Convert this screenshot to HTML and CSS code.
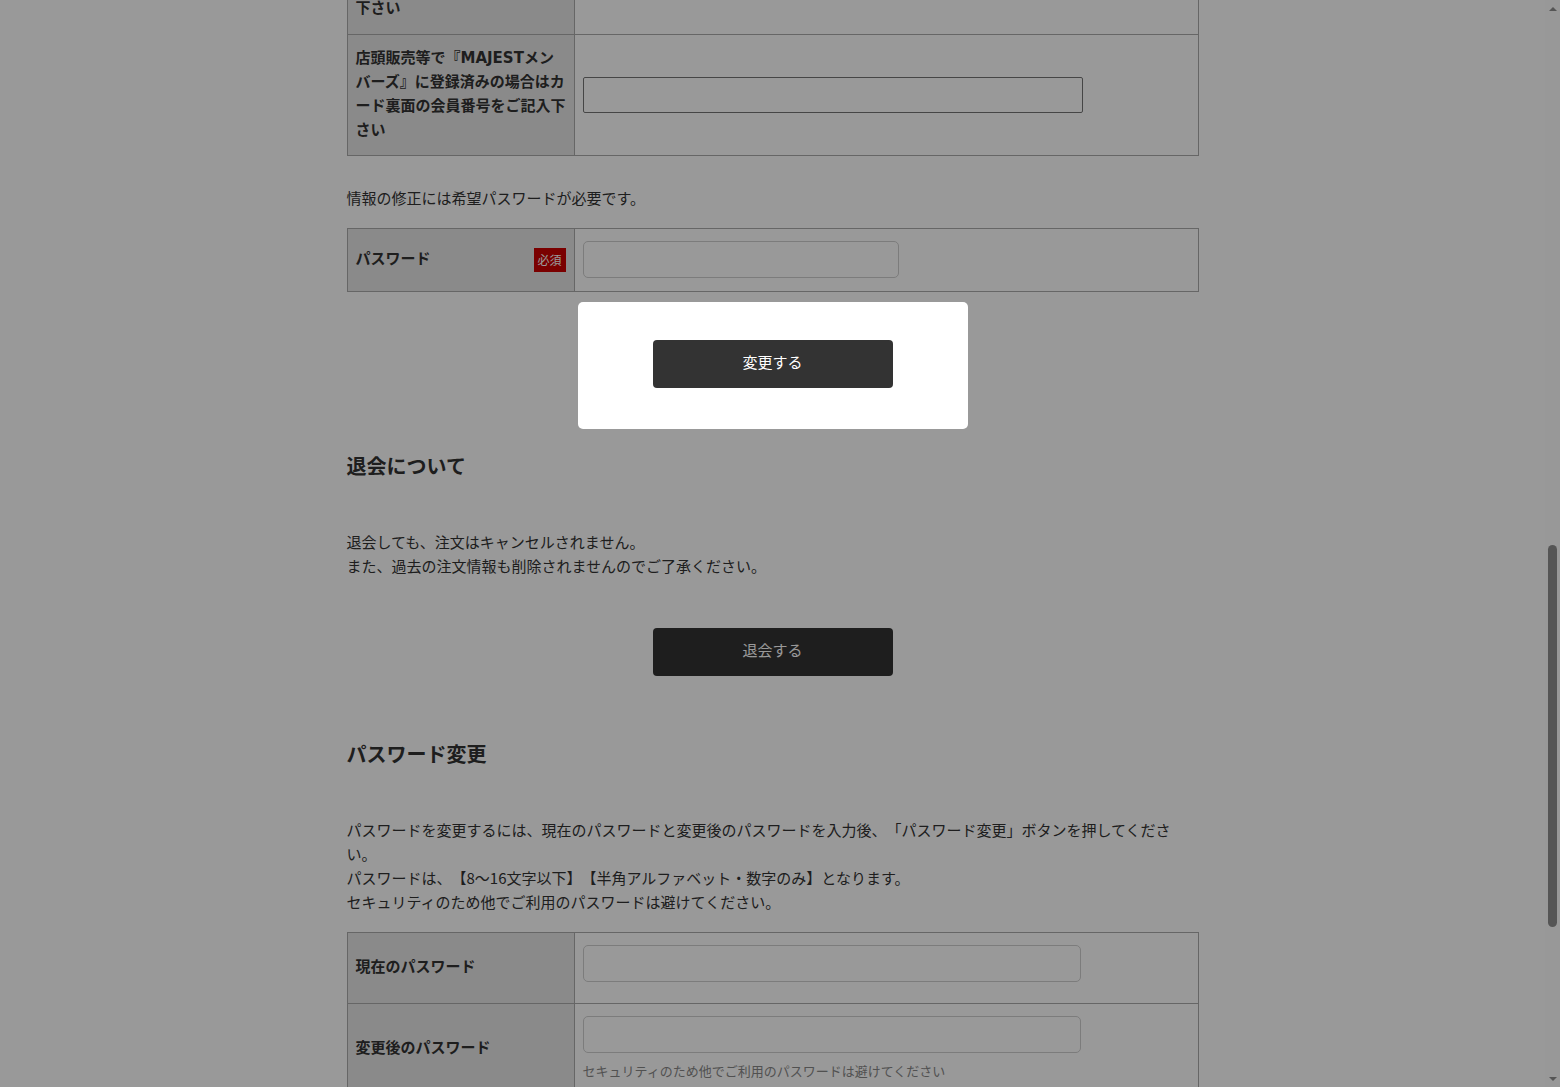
FILE: index.html
```html
<!DOCTYPE html>
<html lang="ja">
<head>
<meta charset="utf-8">
<title>会員情報変更</title>
<link rel="stylesheet" href="styles.css">
</head>
<body>
<div class="viewport">
  <main class="page">
    <div class="container">
      <div class="form-table">
        <div class="th th--cut">下さい</div>
        <div class="td"></div>
        <div class="th">店頭販売等で『MAJESTメンバーズ』に登録済みの場合はカード裏面の会員番号をご記入下さい</div>
        <div class="td td--mid"><input class="input-plain" type="text"></div>
      </div>

      <p class="info">情報の修正には希望パスワードが必要です。</p>

      <div class="form-table">
        <div class="th th--req"><span>パスワード</span><span class="badge">必須</span></div>
        <div class="td td--mid"><input class="input input--short" type="password"></div>
      </div>

      <div class="btn-area">
        <div class="spot"><button class="btn" type="button">変更する</button></div>
      </div>

      <section class="section">
        <h2 class="heading">退会について</h2>
        <p class="text">退会しても、注文はキャンセルされません。<br>また、過去の注文情報も削除されませんのでご了承ください。</p>
        <div class="btn-area"><button class="btn" type="button">退会する</button></div>
      </section>

      <section class="section">
        <h2 class="heading">パスワード変更</h2>
        <p class="text">パスワードを変更するには、現在のパスワードと変更後のパスワードを入力後、「パスワード変更」ボタンを押してください。<br>パスワードは、【8～16文字以下】【半角アルファベット・数字のみ】となります。<br>セキュリティのため他でご利用のパスワードは避けてください。</p>
        <div class="form-table form-table--pw">
          <div class="th">現在のパスワード</div>
          <div class="td td--first"><input class="input input--long" type="password"></div>
          <div class="th">変更後のパスワード</div>
          <div class="td"><input class="input input--long" type="password"><p class="hint">セキュリティのため他でご利用のパスワードは避けてください</p></div>
        </div>
      </section>
    </div>
  </main>
  <div class="scrollbar" aria-hidden="true">
    <span class="arrow arrow--up"></span>
    <span class="track-space"></span>
    <span class="thumb"></span>
    <span class="track-space"></span>
    <span class="arrow arrow--down"></span>
  </div>
</div>
</body>
</html>
```
FILE: styles.css
```css
html, body {
  margin: 0;
  padding: 0;
  height: 100%;
  overflow: hidden;
  background: #fff;
}

body {
  font-family: "Noto Sans CJK JP", sans-serif;
  font-size: 15px;
  line-height: 24px;
  color: #333;
  text-spacing-trim: space-all;
}

.viewport {
  display: flex;
  height: 1087px;
}

.page {
  flex: 1;
  min-width: 0;
}

.container {
  width: 852px;
  margin: -4px auto 0;
}

/* form tables */
.form-table {
  display: grid;
  grid-template-columns: 227px 1fr;
  border: 1px solid #aaa;
  border-bottom: none;
}

.th {
  box-sizing: border-box;
  background: #e6e6e6;
  border-right: 1px solid #aaa;
  border-bottom: 1px solid #aaa;
  padding: 11px 8px 13px;
  font-family: "DejaVu Sans", "Noto Sans CJK JP", sans-serif;
  font-weight: bold;
  display: flex;
  align-items: center;
}

.form-table:first-child {
  border-top: none;
}

.th--cut {
  padding-top: 0;
  padding-bottom: 14px;
}

.th--req {
  justify-content: space-between;
}

.badge {
  display: inline-flex;
  align-items: center;
  justify-content: center;
  width: 32px;
  height: 24px;
  margin-top: 2px;
  background: #cc0000;
  color: #fff;
  font-family: "Noto Sans CJK JP", sans-serif;
  font-size: 12px;
  font-weight: normal;
  line-height: 1;
}

.td {
  box-sizing: border-box;
  border-bottom: 1px solid #aaa;
  padding: 12px 8px 13px;
  background: #fff;
}

.td--mid {
  display: flex;
  align-items: center;
}

.td--first {
  padding-bottom: 21px;
}

.input-plain {
  display: block;
  box-sizing: border-box;
  width: 500px;
  height: 36px;
  margin: 0;
  border: 1px solid #767676;
  border-radius: 2px;
  background: #fff;
}

.input {
  display: block;
  box-sizing: border-box;
  height: 37px;
  margin: 0;
  border: 1px solid #cfcfcf;
  border-radius: 5px;
  background: #fff;
}

.input--short { width: 316px; }
.input--long { width: 498px; }

.hint {
  margin: 8px 0 0;
  font-size: 13px;
  line-height: 20px;
  color: #888;
}

.info {
  margin: 30px 0 18px;
}

/* buttons */
.btn-area {
  display: flex;
  justify-content: center;
  margin-top: 48px;
}

.section .btn-area {
  margin-top: 50px;
}

.spot {
  position: relative;
  z-index: 5;
  padding: 38px 75px 41px;
  margin: -38px 0 -41px;
  background: #fff;
  border-radius: 5px;
  box-shadow: 0 0 0 4000px rgba(0, 0, 0, 0.4);
}

.btn {
  display: block;
  box-sizing: border-box;
  width: 240px;
  height: 48px;
  margin: 0;
  padding: 0 0 5px;
  border: none;
  border-radius: 4px;
  background: #333;
  color: #fff;
  font-family: inherit;
  font-size: 15px;
  cursor: pointer;
}

/* sections */
.section {
  margin-top: 63px;
}

.heading {
  margin: 0 0 49px;
  font-size: 20px;
  line-height: 30px;
  font-weight: bold;
  color: #333;
}

.text {
  margin: 0;
}

.form-table--pw {
  margin-top: 18px;
}

/* fake scrollbar */
.scrollbar {
  flex: none;
  width: 15px;
  background: #fdfdfd;
  display: grid;
  grid-template-rows: 17px 528fr 382px 143fr 17px;
  justify-items: center;
}

.arrow {
  width: 0;
  height: 0;
  border-left: 4px solid transparent;
  border-right: 4px solid transparent;
}

.arrow--up {
  align-self: center;
  border-bottom: 4px solid #8e8e8e;
}

.arrow--down {
  align-self: center;
  border-top: 4px solid #8e8e8e;
}

.thumb {
  width: 9px;
  background: #8e8e8e;
  border-radius: 5px;
}
```
